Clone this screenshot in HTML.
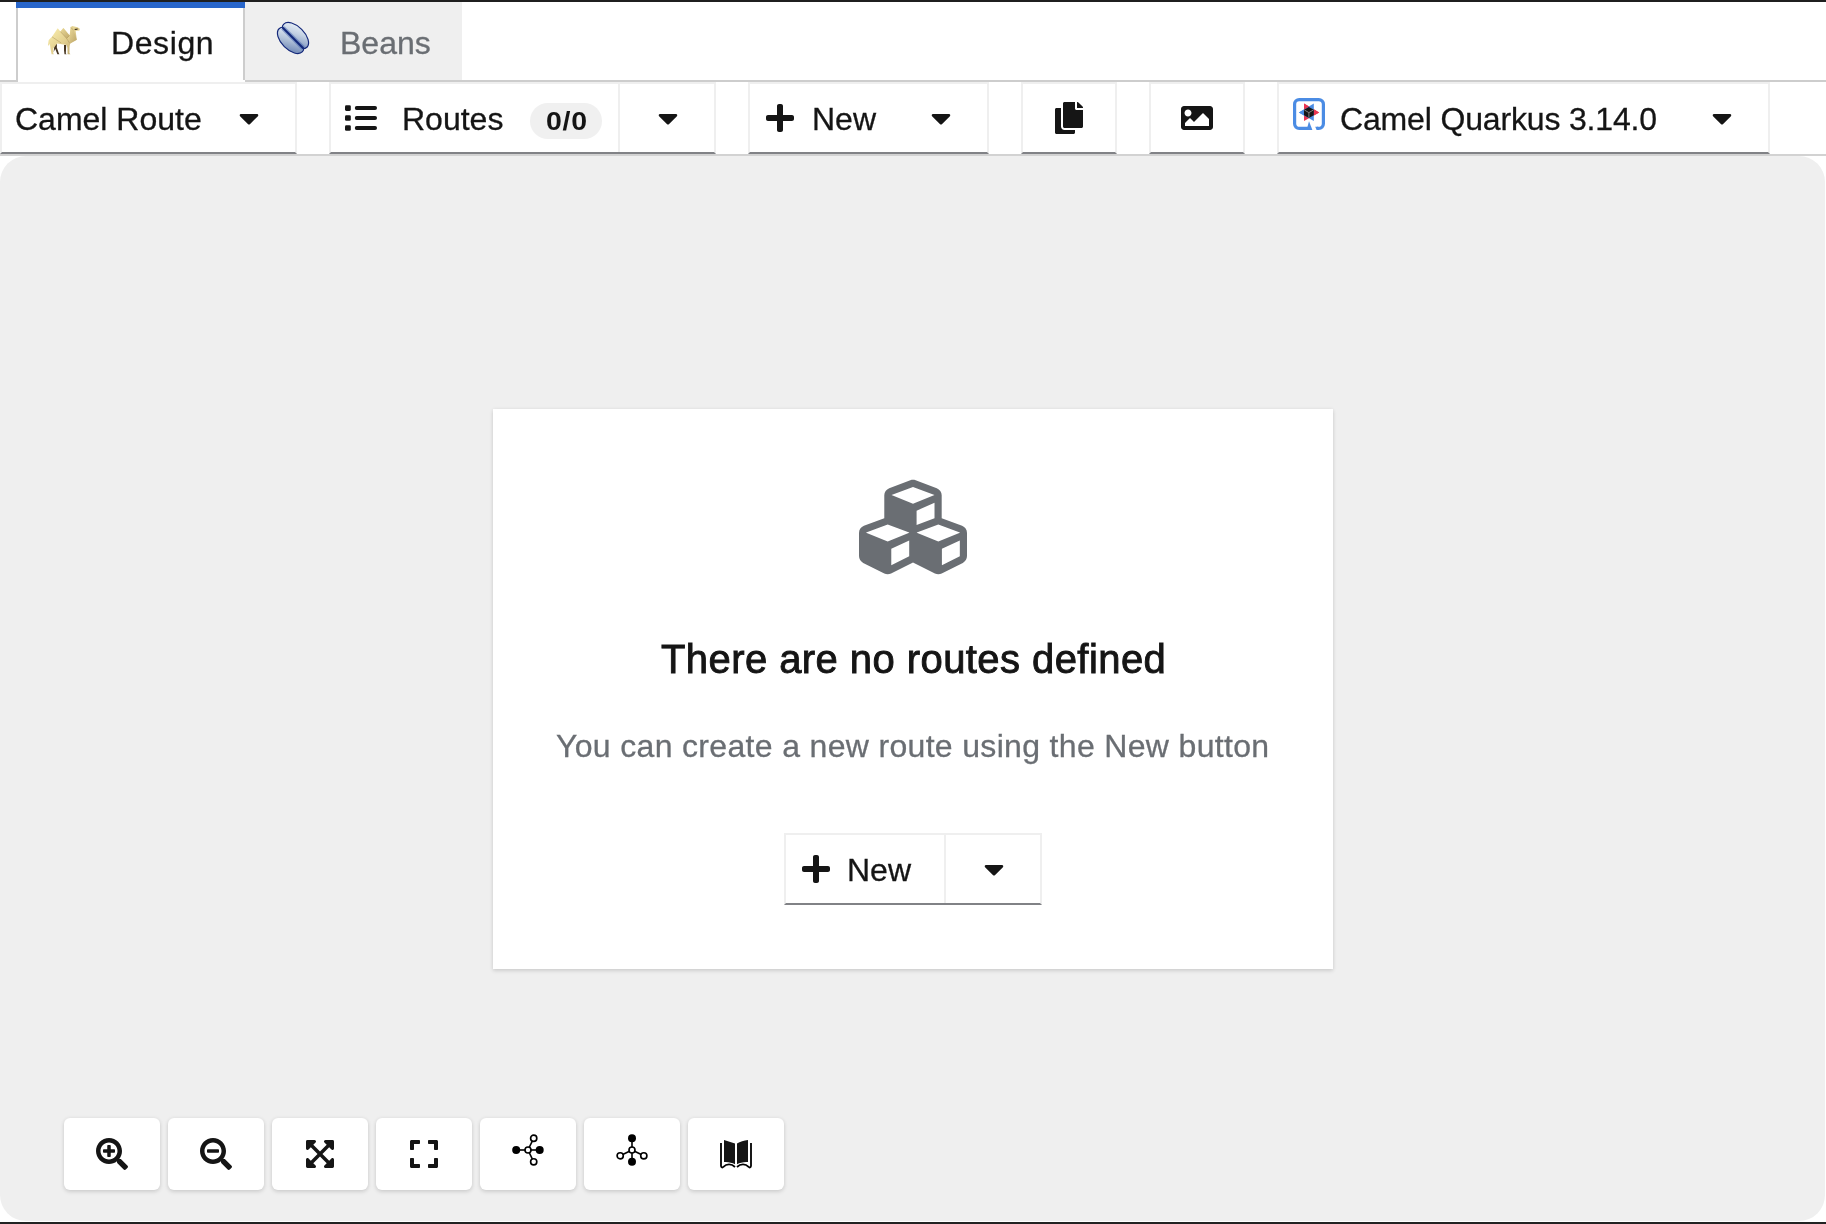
<!DOCTYPE html>
<html><head><meta charset="utf-8">
<style>
*{box-sizing:border-box;margin:0;padding:0}
html,body{width:1826px;height:1224px;overflow:hidden;background:#fff;font-family:"Liberation Sans",sans-serif;color:#151515}
.a{position:absolute}
.t{position:absolute;white-space:pre;line-height:1;font-size:32px;will-change:transform;-webkit-text-stroke-width:0.3px}
svg{position:absolute;display:block}
.tog{position:absolute;top:82px;height:72px;border:2px solid #efefef;border-bottom:2px solid #818286;background:#fff}
.tb{position:absolute;top:1118px;width:96px;height:72px;background:#fff;border-radius:6px;box-shadow:0 2px 4px rgba(3,3,3,.12),0 0 4px rgba(3,3,3,.06)}
</style></head><body>
<!-- window top/bottom dark lines -->
<div class="a" style="left:0;top:0;width:1826px;height:2px;background:#1f1f1f"></div>
<div class="a" style="left:0;top:1222px;width:1826px;height:2px;background:#222"></div>

<!-- tabs -->
<div class="a" style="left:0;top:80px;width:1826px;height:2px;background:#cdcdcd"></div>
<div class="a" style="left:16px;top:2px;width:229px;height:80px;background:#fff;border-left:2px solid #cdcdcd"></div>
<div class="a" style="left:243px;top:2px;width:219px;height:78px;background:#efefef;border-left:2px solid #cdcdcd"></div>
<div class="a" style="left:16px;top:2px;width:229px;height:6px;background:#2966ca"></div>
<div class="t" style="left:111px;top:27px;letter-spacing:0.6px">Design</div>
<div class="t" style="left:340px;top:27px;color:#6a6e73">Beans</div>

<!-- toolbar -->
<div class="a" style="left:0;top:154px;width:1826px;height:2px;background:#d2d2d2"></div>
<div class="tog" style="left:0;width:297px"></div>
<div class="tog" style="left:329px;width:387px"></div>
<div class="a" style="left:618px;top:84px;width:2px;height:68px;background:#efefef"></div>
<div class="tog" style="left:748px;width:241px"></div>
<div class="tog" style="left:1021px;width:96px"></div>
<div class="tog" style="left:1149px;width:96px"></div>
<div class="tog" style="left:1277px;width:493px"></div>

<div class="t" style="left:15px;top:103px">Camel Route</div>
<div class="t" style="left:402px;top:103px">Routes</div>
<div class="a" style="left:530px;top:103px;width:72px;height:36px;border-radius:18px;background:#f0f0f0"></div>
<div class="t" style="left:545.6px;top:109px;font-size:25px;font-weight:700;-webkit-text-stroke-width:0;letter-spacing:0.6px;transform:scaleX(1.14);transform-origin:0 0">0/0</div>
<div class="t" style="left:812px;top:103px">New</div>
<div class="t" style="left:1340px;top:103px;letter-spacing:-0.16px">Camel Quarkus 3.14.0</div>

<!-- canvas -->
<div class="a" style="left:0;top:156px;width:1825px;height:1065px;background:#efefef;border-radius:26px"></div>

<!-- card -->
<div class="a" style="left:493px;top:409px;width:840px;height:560px;background:#fff;box-shadow:0 2px 4px rgba(3,3,3,.12),0 0 4px rgba(3,3,3,.06)"></div>
<div class="t" style="left:661px;top:639px;font-size:40px;font-weight:400;letter-spacing:0.43px;-webkit-text-stroke:0.9px #151515">There are no routes defined</div>
<div class="t" style="left:556px;top:730px;color:#6a6e73;letter-spacing:0.33px">You can create a new route using the New button</div>
<div class="a" style="left:784px;top:833px;width:258px;height:72px;border:2px solid #efefef;border-bottom:2px solid #818286;background:#fff"></div>
<div class="a" style="left:944px;top:835px;width:2px;height:68px;background:#efefef"></div>
<div class="t" style="left:847px;top:854px">New</div>

<!-- bottom toolbar -->
<div class="tb" style="left:64px"></div>
<div class="tb" style="left:168px"></div>
<div class="tb" style="left:272px"></div>
<div class="tb" style="left:376px"></div>
<div class="tb" style="left:480px"></div>
<div class="tb" style="left:584px"></div>
<div class="tb" style="left:688px"></div>

<!-- ICONS -->
<!-- camel -->
<svg style="left:0;top:0" width="100" height="70" viewBox="0 0 100 70">
<defs><linearGradient id="cg" x1="0.1" y1="0.2" x2="0.9" y2="0.9"><stop offset="0" stop-color="#f6e9a8"/><stop offset="0.5" stop-color="#e2cf8f"/><stop offset="1" stop-color="#bca468"/></linearGradient>
<linearGradient id="cg2" x1="0" y1="0" x2="1" y2="1"><stop offset="0" stop-color="#e9d898"/><stop offset="1" stop-color="#b39a5c"/></linearGradient></defs>
<path fill="#45341f" d="M54.4 45.8 L57 43.6 L56.8 47.6 L58.8 53.2 L59.4 54.3 L57.4 54.3 L55.2 48.8 L53.6 52.2 Z"/>
<path fill="#45341f" d="M64 45 L66.2 45 L65.8 53.6 L66.6 54.3 L64.5 54.3 L64 50 Z"/>
<path fill="url(#cg)" d="M49.2 39.6 L52 36.8 L57.7 28.2 L60.4 31.6 L63.4 28 L69.6 35.4 L70.6 27.4 L72.2 26 L77.6 27.2 L79.8 28.8 L79.4 30.4 L75.6 30.8 L76.8 39.8 L70.2 43.4 L69.6 46.2 L69.4 53 L70.4 54.3 L67.6 54.3 L67.4 47.8 L66.6 45 L57.2 43.4 L53.2 48.6 L53.2 53.2 L54 54.3 L51.6 54.3 L50.6 49.2 L49.8 43.4 L48.9 45.8 L48 45 L48.6 40.6 Z"/>
<path fill="url(#cg2)" opacity="0.7" d="M60.4 31.6 L63.4 28 L69.6 35.4 L66.6 38.4 Z"/>
<path fill="url(#cg2)" opacity="0.6" d="M70.6 27.4 L72.2 26 L76.8 39.8 L70.2 43.4 L69.6 35.4 Z"/>
<path fill="none" stroke="#a68c54" stroke-width="0.45" d="M52 36.8 L61.2 43 M60.4 31.6 L66.6 38.4 L69.6 35.4 M66.6 38.4 L69.8 43.4 M70.6 27.4 L73.4 30"/>
<path fill="#3a2d1c" d="M74.4 29 L77.8 28.4 L77.4 29.8 L75 30 Z"/>
</svg>
<!-- bean -->
<svg style="left:272px;top:18px" width="42" height="40" viewBox="0 0 42 40">
<defs><linearGradient id="bg1" x1="0" y1="0" x2="0.9" y2="1"><stop offset="0" stop-color="#f6fbfe"/><stop offset="0.45" stop-color="#c3d1e3"/><stop offset="1" stop-color="#6a83b3"/></linearGradient>
<linearGradient id="bg2" x1="0" y1="0" x2="1" y2="0.9"><stop offset="0" stop-color="#f6fbfe"/><stop offset="0.5" stop-color="#b4c4da"/><stop offset="1" stop-color="#5e79ad"/></linearGradient>
<clipPath id="ctop"><rect x="-30" y="-30" width="60" height="30"/></clipPath><clipPath id="cbot"><rect x="-30" y="0" width="60" height="30"/></clipPath></defs>
<g transform="translate(21 20) rotate(45) scale(0.93)">
<g clip-path="url(#ctop)"><ellipse cx="0" cy="-3.6" rx="17.6" ry="9.6" fill="url(#bg1)" stroke="#14287a" stroke-width="1.3"/></g>
<g clip-path="url(#cbot)"><ellipse cx="0" cy="3.6" rx="17.6" ry="9.6" fill="url(#bg2)" stroke="#14287a" stroke-width="1.3"/></g>
<path d="M-15.5 0 L15.5 0" stroke="#3d5fae" stroke-width="5" opacity="0.45"/>
<path d="M-16.3 0 L16.3 0" stroke="#13287a" stroke-width="2.2"/>
</g></svg>
<!-- quarkus -->
<svg style="left:1293px;top:98px" width="32" height="32" viewBox="0 0 32 32">
<path fill="none" stroke="#4b8ce4" stroke-width="3.2" stroke-linejoin="round" d="M15.2 30.4 H6.2 A4.6 4.6 0 0 1 1.6 25.8 V6.2 A4.6 4.6 0 0 1 6.2 1.6 H25.8 A4.6 4.6 0 0 1 30.4 6.2 V25.8 A4.6 4.6 0 0 1 25.8 30.4 H24"/>
<path fill="#4b8ce4" d="M22.2 28.8 H25 V32 H23.6 Z"/>
<path fill="#4b8ce4" d="M13.6 32 L16 23.2 L19.4 32 Z"/>
<path fill="#e93651" d="M11 5.6 L26.2 14.45 L11 23 Z"/>
<path fill="#4b8ce4" d="M20.8 5.6 L5.9 14.45 L20.8 23 Z"/>
<path fill="#e93651" d="M11 5.6 L16 8.4 L13.5 10 L11 11.5 Z"/>
<path fill="#e93651" d="M26.2 14.45 L20.8 11.3 L20.8 17.6 Z"/>
<path fill="#4b8ce4" d="M5.9 14.45 L11 11.5 L11 17.5 Z"/>
<path fill="#161616" d="M15.9 9 L20.8 11.8 V17.2 L15.9 20 L11 17.2 V11.8 Z"/>
<path fill="none" stroke="#8b8b8b" stroke-width="0.9" d="M11.4 12 L15.9 14.6 L20.4 12 M15.9 14.6 V19.6"/>
</svg>

<!-- carets -->
<svg style="left:239px;top:102px" width="20" height="32" viewBox="0 0 320 512"><path fill="#151515" d="M31.3 192h257.3c17.8 0 26.7 21.5 14.1 34.1L174.1 354.8c-7.8 7.8-20.5 7.8-28.3 0L17.2 226.1C4.6 213.5 13.5 192 31.3 192z"/></svg>
<svg style="left:658px;top:102px" width="20" height="32" viewBox="0 0 320 512"><path fill="#151515" d="M31.3 192h257.3c17.8 0 26.7 21.5 14.1 34.1L174.1 354.8c-7.8 7.8-20.5 7.8-28.3 0L17.2 226.1C4.6 213.5 13.5 192 31.3 192z"/></svg>
<svg style="left:931px;top:102px" width="20" height="32" viewBox="0 0 320 512"><path fill="#151515" d="M31.3 192h257.3c17.8 0 26.7 21.5 14.1 34.1L174.1 354.8c-7.8 7.8-20.5 7.8-28.3 0L17.2 226.1C4.6 213.5 13.5 192 31.3 192z"/></svg>
<svg style="left:1712px;top:102px" width="20" height="32" viewBox="0 0 320 512"><path fill="#151515" d="M31.3 192h257.3c17.8 0 26.7 21.5 14.1 34.1L174.1 354.8c-7.8 7.8-20.5 7.8-28.3 0L17.2 226.1C4.6 213.5 13.5 192 31.3 192z"/></svg>
<svg style="left:984px;top:853px" width="20" height="32" viewBox="0 0 320 512"><path fill="#151515" d="M31.3 192h257.3c17.8 0 26.7 21.5 14.1 34.1L174.1 354.8c-7.8 7.8-20.5 7.8-28.3 0L17.2 226.1C4.6 213.5 13.5 192 31.3 192z"/></svg>
<!-- list icon -->
<svg style="left:345px;top:102px" width="32" height="32" viewBox="0 0 32 32">
<g fill="#151515"><rect x="0" y="3.3" width="5.8" height="5.6" rx="1.3"/><rect x="0" y="13.2" width="5.8" height="5.6" rx="1.3"/><rect x="0" y="23.2" width="5.8" height="5.6" rx="1.3"/>
<rect x="9.8" y="4.1" width="22.2" height="3.8" rx="1.9"/><rect x="9.8" y="14.1" width="22.2" height="3.8" rx="1.9"/><rect x="9.8" y="24.1" width="22.2" height="3.8" rx="1.9"/></g></svg>
<!-- plus icons -->
<svg style="left:766px;top:102px" width="28" height="32" viewBox="0 0 448 512"><path fill="#151515" d="M416 208H272V64c0-17.67-14.33-32-32-32h-32c-17.67 0-32 14.33-32 32v144H32c-17.67 0-32 14.33-32 32v32c0 17.67 14.33 32 32 32h144v144c0 17.67 14.33 32 32 32h32c17.67 0 32-14.33 32-32V304h144c17.67 0 32-14.33 32-32v-32c0-17.67-14.33-32-32-32z"/></svg>
<svg style="left:802px;top:853px" width="28" height="32" viewBox="0 0 448 512"><path fill="#151515" d="M416 208H272V64c0-17.67-14.330-32-32-32h-32c-17.67 0-32 14.33-32 32v144H32c-17.67 0-32 14.33-32 32v32c0 17.67 14.33 32 32 32h144v144c0 17.67 14.33 32 32 32h32c17.67 0 32-14.33 32-32V304h144c17.670 0 32-14.33 32-32v-32c0-17.67-14.33-32-32-32z"/></svg>
<!-- copy -->
<svg style="left:1055px;top:102px" width="28" height="32" viewBox="0 0 448 512"><path fill="#151515" d="M320 448v40c0 13.255-10.745 24-24 24H24c-13.255 0-24-10.745-24-24V120c0-13.255 10.745-24 24-24h72v296c0 30.879 25.121 56 56 56h168zm0-344V0H152c-13.255 0-24 10.745-24 24v368c0 13.255 10.745 24 24 24h272c13.255 0 24-10.745 24-24V128H344c-13.2 0-24-10.8-24-24zm120.971-31.029L375.029 7.029A24 24 0 0 0 358.059 0H352v96h96v-6.059a24 24 0 0 0-7.029-16.97z"/></svg>
<!-- image -->
<svg style="left:1181px;top:102px" width="32" height="32" viewBox="0 0 512 512"><path fill="#151515" d="M464 448H48c-26.51 0-48-21.49-48-48V112c0-26.51 21.49-48 48-48h416c26.51 0 48 21.49 48 48v288c0 26.51-21.49 48-48 48zM112 120c-30.928 0-56 25.072-56 56s25.072 56 56 56 56-25.072 56-56-25.072-56-56-56zM64 384h384V272l-87.515-87.515c-4.686-4.686-12.284-4.686-16.971 0L208 320l-55.515-55.515c-4.686-4.686-12.284-4.686-16.971 0L64 336v48z"/></svg>
<!-- cubes -->
<svg style="left:859px;top:472.6px" width="108" height="108" viewBox="0 0 512 512"><path fill="#6a6e73" d="M488.6 250.2L392 214V105.5c0-15-9.3-28.4-23.4-33.7l-100-37.5c-8.1-3.1-17.1-3.1-25.3 0l-100 37.5c-14.1 5.3-23.4 18.7-23.4 33.7V214l-96.6 36.2C9.3 255.5 0 268.9 0 283.9V394c0 13.6 7.7 26.1 19.9 32.2l100 50c10.1 5.1 22.1 5.1 32.2 0l103.9-52 103.9 52c10.1 5.1 22.1 5.1 32.2 0l100-50c12.2-6.1 19.900-18.6 19.9-32.2V283.9c0-15-9.3-28.4-23.4-33.7zM358 214.8l-85 31.9v-68.2l85-37v73.3zM154 104.1l102-38.2 102 38.2v.6l-102 41.4-102-41.4v-.6zm84 291.1l-85 42.5v-79.1l85-38.8v75.4zm0-112l-102 41.4-102-41.4v-.6l102-38.2 102 38.2v.6zm240 112l-85 42.5v-79.1l85-38.8v75.4zm0-112l-102 41.4-102-41.4v-.6l102-38.2 102 38.2v.6z"/></svg>
<!-- bottom toolbar icons -->
<svg style="left:96px;top:1138px" width="32" height="32" viewBox="0 0 512 512"><path fill="#151515" d="M304 192v32c0 6.6-5.4 12-12 12h-56v56c0 6.6-5.4 12-12 12h-32c-6.6 0-12-5.4-12-12v-56h-56c-6.6 0-12-5.4-12-12v-32c0-6.6 5.4-12 12-12h56v-56c0-6.6 5.4-12 12-12h32c6.6 0 12 5.4 12 12v56h56c6.6 0 12 5.4 12 12zm201 284.7L476.7 505c-9.4 9.4-24.6 9.4-33.9 0L343 405.3c-4.5-4.5-7-10.6-7-17V372c-35.3 27.6-79.7 44-128 44C93.1 416 0 322.9 0 208S93.1 0 208 0s208 93.1 208 208c0 48.3-16.4 92.7-44 128h16.3c6.4 0 12.5 2.5 17 7l99.7 99.7c9.3 9.4 9.3 24.6 0 34zM344 208c0-75.2-60.8-136-136-136S72 132.8 72 208s60.8 136 136 136 136-60.8 136-136z"/></svg>
<svg style="left:200px;top:1138px" width="32" height="32" viewBox="0 0 512 512"><path fill="#151515" d="M304 192v32c0 6.6-5.4 12-12 12H124c-6.6 0-12-5.4-12-12v-32c0-6.6 5.4-12 12-12h168c6.6 0 12 5.4 12 12zm201 284.7L476.7 505c-9.4 9.4-24.6 9.4-33.9 0L343 405.3c-4.5-4.5-7-10.6-7-17V372c-35.3 27.6-79.7 44-128 44C93.1 416 0 322.9 0 208S93.1 0 208 0s208 93.1 208 208c0 48.3-16.4 92.7-44 128h16.3c6.4 0 12.5 2.5 17 7l99.7 99.7c9.3 9.4 9.3 24.6 0 34zM344 208c0-75.2-60.8-136-136-136S72 132.8 72 208s60.8 136 136 136 136-60.8 136-136z"/></svg>
<svg style="left:306px;top:1138px" width="28" height="32" viewBox="0 0 448 512"><path fill="#151515" d="M448 344v112a23.94 23.94 0 0 1-24 24H312c-21.39 0-32.09-25.9-17-41l36.2-36.2L224 295.6 116.77 402.9 153 439c15.09 15.1 4.39 41-17 41H24a23.94 23.94 0 0 1-24-24V344c0-21.4 25.89-32.1 41-17l36.19 36.2L184.46 256 77.18 148.7 41 185c-15.1 15.1-41 4.4-41-17V56a23.94 23.94 0 0 1 24-24h112c21.39 0 32.09 25.9 17 41l-36.2 36.2L224 216.4l107.23-107.3L295 73c-15.09-15.1-4.39-41 17-41h112a23.94 23.94 0 0 1 24 24v112c0 21.4-25.890 32.1-41 17l-36.19-36.2L263.54 256l107.28 107.3L407 327.1c15.1-15.2 41-4.5 41 16.9z"/></svg>
<svg style="left:410px;top:1138px" width="28" height="32" viewBox="0 0 448 512"><path fill="#151515" d="M0 180V56c0-13.3 10.7-24 24-24h124c6.6 0 12 5.4 12 12v40c0 6.6-5.4 12-12 12H64v84c0 6.6-5.4 12-12 12H12c-6.6 0-12-5.4-12-12zM288 44v40c0 6.6 5.4 12 12 12h84v84c0 6.6 5.4 12 12 12h40c6.6 0 12-5.4 12-12V56c0-13.3-10.7-24-24-24H300c-6.6 0-12 5.4-12 12zm148 276h-40c-6.6 0-12 5.4-12 12v84h-84c-6.6 0-12 5.4-12 12v40c0 6.6 5.4 12 12 12h124c13.3 0 24-10.7 24-24V332c0-6.6-5.4-12-12-12zM160 468v-40c0-6.6-5.4-12-12-12H64v-84c0-6.6-5.4-12-12-12H12c-6.6 0-12 5.4-12 12v124c0 13.3 10.7 24 24 24h124c6.6 0 12-5.4 12-12z"/></svg>
<!-- topology horizontal -->
<svg style="left:512px;top:1134px" width="32" height="32" viewBox="0 0 32 32">
<g stroke="#000" stroke-width="1.6" fill="none"><line x1="4" y1="16" x2="28" y2="16"/><line x1="16" y1="16" x2="21.7" y2="4.2"/><line x1="16" y1="16" x2="21.7" y2="27.8"/></g>
<circle cx="4.2" cy="16" r="4" fill="#000"/><circle cx="27.7" cy="16" r="4" fill="#000"/>
<circle cx="16" cy="16" r="3.0" fill="#fff" stroke="#000" stroke-width="1.65"/>
<circle cx="21.7" cy="4.2" r="3.1" fill="#fff" stroke="#000" stroke-width="1.65"/>
<circle cx="21.7" cy="27.8" r="3.1" fill="#fff" stroke="#000" stroke-width="1.65"/></svg>
<!-- topology vertical -->
<svg style="left:616px;top:1134px" width="32" height="32" viewBox="0 0 32 32">
<g stroke="#000" stroke-width="1.6" fill="none"><line x1="16" y1="4" x2="16" y2="28"/><line x1="16" y1="16" x2="4.2" y2="21.8"/><line x1="16" y1="16" x2="27.8" y2="21.8"/></g>
<circle cx="16" cy="4.2" r="4" fill="#000"/><circle cx="16" cy="27.7" r="4" fill="#000"/>
<circle cx="16" cy="16" r="3.0" fill="#fff" stroke="#000" stroke-width="1.65"/>
<circle cx="4.2" cy="21.8" r="3.1" fill="#fff" stroke="#000" stroke-width="1.65"/>
<circle cx="27.8" cy="21.8" r="3.1" fill="#fff" stroke="#000" stroke-width="1.65"/></svg>
<!-- catalog book -->
<svg style="left:720px;top:1138px" width="32" height="32" viewBox="0 0 32 32">
<path fill="#151515" d="M4 2 L15 5.4 V26.2 C12 24.6 8 23.6 4 24 Z"/>
<path fill="#151515" d="M28 2 C24 2.4 20 3.6 17 5.4 V26.2 C20 24.6 24 23.6 28 24 Z"/>
<path fill="none" stroke="#000" stroke-width="1.8" d="M1 5 V28 C1.2 29.6 2.6 30 3.4 28.8 C6.5 25.6 11.5 25.6 15 29"/>
<path fill="none" stroke="#000" stroke-width="1.8" d="M31 5 V28 C30.8 29.6 29.4 30 28.6 28.8 C25.5 25.6 20.5 25.6 17 29"/>
</svg>

</body></html>
